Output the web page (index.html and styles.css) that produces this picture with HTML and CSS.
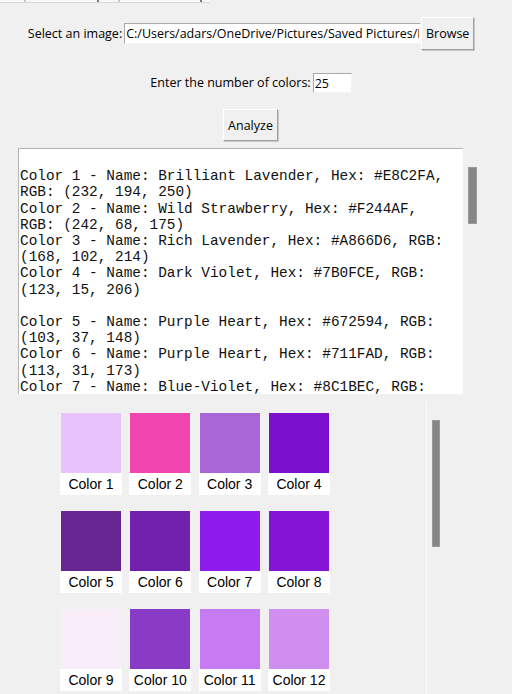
FILE: index.html
```html
<!DOCTYPE html>
<html lang="en">
<head>
<meta charset="utf-8">
<title>Color Analyzer</title>
<link rel="stylesheet" href="styles.css">
</head>
<body>
<div class="app">
  <div class="tabstrip">
    <div class="tabs"><span class="tick t1"></span><span class="tick t2"></span><span class="tick t3"></span><span class="tick t4"></span></div>
  </div>

  <div class="row row-file">
    <span class="label">Select an image:</span>
    <input class="entry entry-path" type="text" readonly value="C:/Users/adars/OneDrive/Pictures/Saved Pictures/Purple Flowers.png">
    <button class="btn btn-browse" type="button">Browse</button>
  </div>

  <div class="row row-count">
    <span class="label">Enter the number of colors:</span>
    <input class="entry entry-count" type="text" readonly value="25">
  </div>

  <div class="row row-analyze">
    <button class="btn btn-analyze" type="button">Analyze</button>
  </div>

  <div class="output">
    <div class="text">
Color 1 - Name: Brilliant Lavender, Hex: #E8C2FA,
RGB: (232, 194, 250)
Color 2 - Name: Wild Strawberry, Hex: #F244AF,
RGB: (242, 68, 175)
Color 3 - Name: Rich Lavender, Hex: #A866D6, RGB:
(168, 102, 214)
Color 4 - Name: Dark Violet, Hex: #7B0FCE, RGB:
(123, 15, 206)

Color 5 - Name: Purple Heart, Hex: #672594, RGB:
(103, 37, 148)
Color 6 - Name: Purple Heart, Hex: #711FAD, RGB:
(113, 31, 173)
Color 7 - Name: Blue-Violet, Hex: #8C1BEC, RGB:</div>
    <div class="vscroll"><div class="thumb"></div></div>
  </div>

  <div class="swatch-area">
    <div class="canvas">
      <div class="grid">
        <div class="cell"><div class="swatch" style="background:#E8C2FA"></div><div class="cap">Color 1</div></div>
        <div class="cell"><div class="swatch" style="background:#F244AF"></div><div class="cap">Color 2</div></div>
        <div class="cell"><div class="swatch" style="background:#A866D6"></div><div class="cap">Color 3</div></div>
        <div class="cell"><div class="swatch" style="background:#7B0FCE"></div><div class="cap">Color 4</div></div>
        <div class="cell"><div class="swatch" style="background:#672594"></div><div class="cap">Color 5</div></div>
        <div class="cell"><div class="swatch" style="background:#711FAD"></div><div class="cap">Color 6</div></div>
        <div class="cell"><div class="swatch" style="background:#8C1BEC"></div><div class="cap">Color 7</div></div>
        <div class="cell"><div class="swatch" style="background:#8415D6"></div><div class="cap">Color 8</div></div>
        <div class="cell"><div class="swatch" style="background:#F9EDF9"></div><div class="cap">Color 9</div></div>
        <div class="cell"><div class="swatch" style="background:#8A3BC6"></div><div class="cap">Color 10</div></div>
        <div class="cell"><div class="swatch" style="background:#C77BF3"></div><div class="cap">Color 11</div></div>
        <div class="cell"><div class="swatch" style="background:#D08FEE"></div><div class="cap">Color 12</div></div>
      </div>
    </div>
    <div class="vscroll2"><div class="thumb2"></div></div>
  </div>
</div>
</body>
</html>
```

FILE: styles.css
```css
html, body {
  margin: 0;
  padding: 0;
  background: #f0f0f0;
}
body {
  width: 512px;
  height: 694px;
  overflow: hidden;
  font-family: "Open Sans", "Noto Sans", sans-serif;
  font-size: 12.5px;
  color: #000;
}
.app {
  width: 501px;
  display: flex;
  flex-direction: column;
}

/* cut-off tab strip at the very top */
.tabstrip {
  height: 3px;
  display: flex;
}
.tabs {
  width: 210px;
  height: 2px;
  background: #f8f8f8;
  border-bottom: 1px solid #dadada;
  display: flex;
}
.tick {
  width: 2px;
  height: 2px;
  background: #7a7a7a;
}
.t1 { margin-left: 24px; background: #c8c8c8; }
.t2 { margin-left: 71px; }
.t3 { margin-left: 19px; background: #c8c8c8; }
.t4 { margin-left: 80px; }

.row {
  display: flex;
  justify-content: center;
  align-items: center;
}
.row-file { margin-top: 14px; }
.row-count { margin-top: 23px; }
.row-analyze { margin-top: 16px; }

.label {
  white-space: nowrap;
  padding: 0 2px 0 1px;
  line-height: 18px;
}

.entry {
  box-sizing: border-box;
  font: inherit;
  color: #000;
  background: #fff;
  margin: 0;
  padding: 0 1px;
  border-style: solid;
  border-width: 1px;
  border-color: #a9a9a9 #f4f4f4 #f4f4f4 #a9a9a9;
  outline: none;
}
.entry-path {
  width: 297px;
  height: 21px;
}
.entry-count {
  width: 39px;
  height: 20px;
}

.btn {
  box-sizing: border-box;
  font: inherit;
  color: #000;
  margin: 0;
  padding: 0;
  background: #f0f0f0;
  border-style: solid;
  border-width: 1px;
  border-color: #ffffff #a0a0a0 #a0a0a0 #ffffff;
  box-shadow: 1px 1px 0 #c9c9c9;
}
.btn-browse {
  width: 53px;
  height: 33px;
}
.btn-analyze {
  width: 55px;
  height: 32px;
}

/* text output */
.output {
  margin-top: 7px;
  margin-left: 18px;
  display: flex;
  height: 246px;
}
.text {
  box-sizing: border-box;
  width: 445px;
  height: 246px;
  overflow: hidden;
  background: #fff;
  border-top: 1px solid #b4b4b4;
  border-left: 1px solid #b4b4b4;
  padding: 3px 0 0 1px;
  white-space: pre;
  font-family: "Liberation Mono", "DejaVu Sans Mono", monospace;
  font-size: 14.4px;
  line-height: 16.2px;
  color: #111;
}
.vscroll {
  width: 19px;
  display: flex;
  flex-direction: column;
}
.thumb {
  margin-top: 19px;
  margin-left: 5px;
  width: 9px;
  height: 57px;
  box-sizing: border-box;
  background: #868686;
  border: 1px solid #9a9a9a;
}

/* swatch canvas */
.swatch-area {
  margin-top: 7px;
  margin-left: 18px;
  display: flex;
}
.canvas {
  width: 408px;
  height: 300px;
  border-right: 1px solid #fbfbfb;
}
.grid {
  padding: 12px 0 0 42px;
  display: grid;
  grid-template-columns: repeat(4, 62px);
  column-gap: 7.33px;
  row-gap: 16px;
}
.cell {
  display: flex;
  flex-direction: column;
}
.swatch {
  width: 60px;
  height: 60px;
  margin: 0 1px;
}
.cap {
  width: 62px;
  height: 22px;
  background: #fff;
  text-align: center;
  font-family: "Liberation Sans", Arial, sans-serif;
  font-size: 14px;
  line-height: 22px;
  color: #000;
}
.vscroll2 {
  width: 20px;
  display: flex;
  flex-direction: column;
}
.thumb2 {
  margin-top: 19px;
  margin-left: 5px;
  width: 8px;
  height: 127px;
  box-sizing: border-box;
  background: #868686;
  border: 1px solid #9a9a9a;
}
```
